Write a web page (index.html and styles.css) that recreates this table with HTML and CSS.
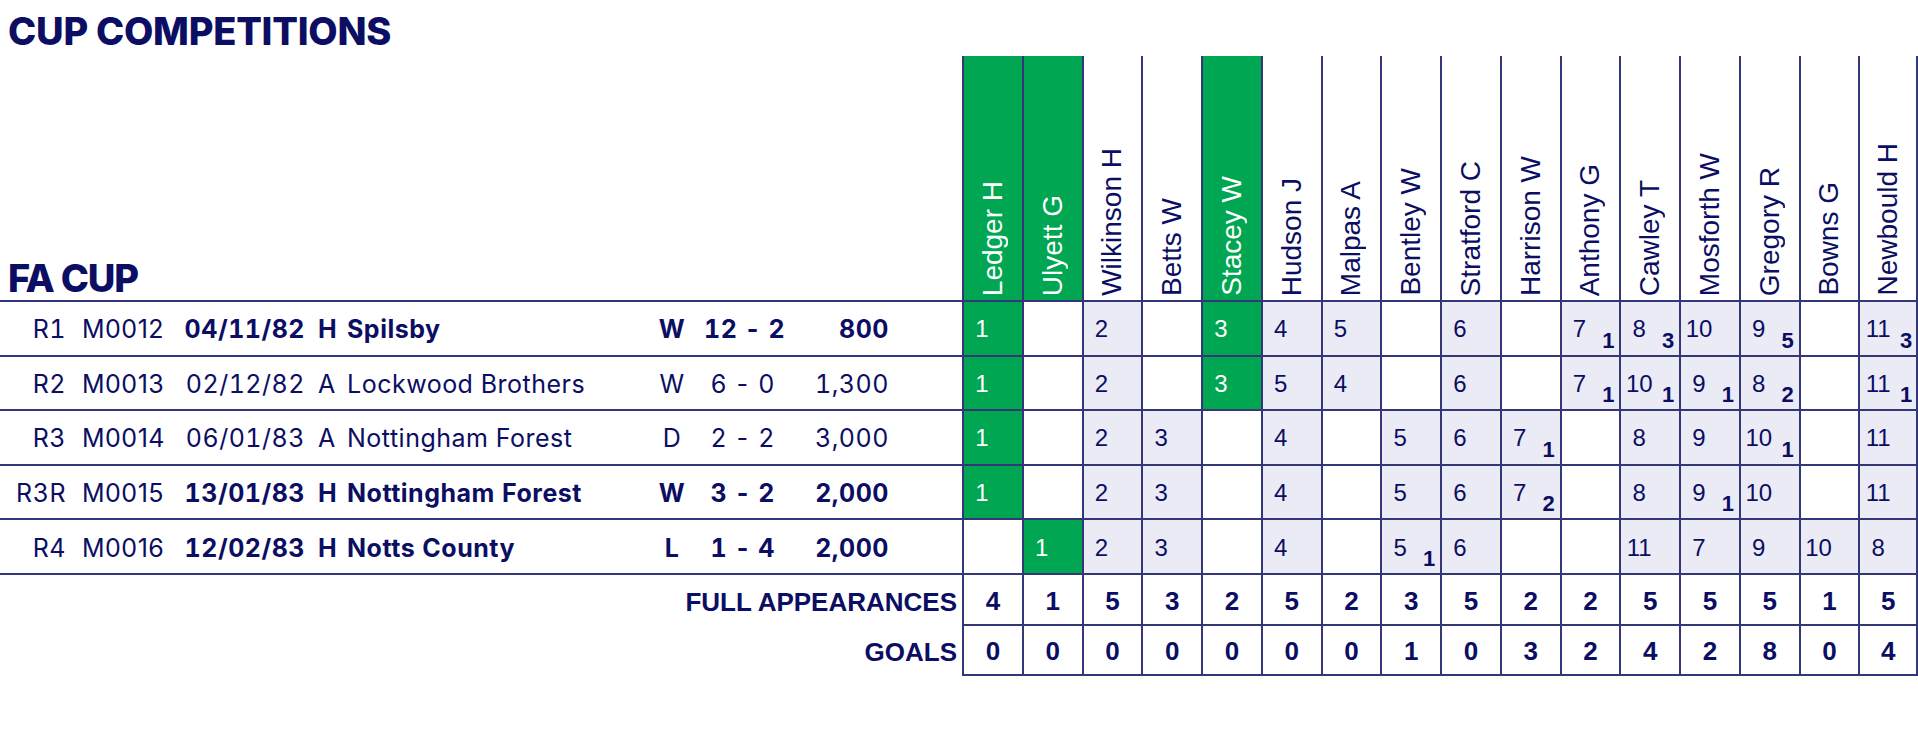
FILE: index.html
```html
<!DOCTYPE html>
<html lang="en">
<head>
<meta charset="utf-8">
<title>Cup Competitions</title>
<link rel="stylesheet" href="styles.css">
</head>
<body>
<h1 class="title">CUP COMPETITIONS</h1>
<div class="sheet">
  <div class="corner">FA CUP</div>
  <div class="h g"><span class="v">Ledger H</span></div>
  <div class="h g"><span class="v">Ulyett G</span></div>
  <div class="h"><span class="v">Wilkinson H</span></div>
  <div class="h"><span class="v">Betts W</span></div>
  <div class="h g"><span class="v">Stacey W</span></div>
  <div class="h"><span class="v">Hudson J</span></div>
  <div class="h"><span class="v">Malpas A</span></div>
  <div class="h"><span class="v">Bentley W</span></div>
  <div class="h"><span class="v">Stratford C</span></div>
  <div class="h"><span class="v">Harrison W</span></div>
  <div class="h"><span class="v">Anthony G</span></div>
  <div class="h"><span class="v">Cawley T</span></div>
  <div class="h"><span class="v">Mosforth W</span></div>
  <div class="h"><span class="v">Gregory R</span></div>
  <div class="h"><span class="v">Bowns G</span></div>
  <div class="h"><span class="v">Newbould H</span></div>

  <!-- R1 -->
  <div class="m b"><span class="rnd">R1</span><span class="code">M0012</span><span class="date">04/11/82</span><span class="ven">H</span><span class="opp">Spilsby</span><span class="res">W</span><span class="sc">12 - 2</span><span class="att">800</span></div>
  <div class="c g"><span class="n">1</span></div>
  <div class="c"></div>
  <div class="c f"><span class="n">2</span></div>
  <div class="c"></div>
  <div class="c g"><span class="n">3</span></div>
  <div class="c f"><span class="n">4</span></div>
  <div class="c f"><span class="n">5</span></div>
  <div class="c"></div>
  <div class="c f"><span class="n">6</span></div>
  <div class="c"></div>
  <div class="c f"><span class="n">7</span><span class="s">1</span></div>
  <div class="c f"><span class="n">8</span><span class="s">3</span></div>
  <div class="c f"><span class="n">10</span></div>
  <div class="c f"><span class="n">9</span><span class="s">5</span></div>
  <div class="c"></div>
  <div class="c f"><span class="n">11</span><span class="s">3</span></div>

  <!-- R2 -->
  <div class="m"><span class="rnd">R2</span><span class="code">M0013</span><span class="date">02/12/82</span><span class="ven">A</span><span class="opp">Lockwood Brothers</span><span class="res">W</span><span class="sc">6 - 0</span><span class="att">1,300</span></div>
  <div class="c g"><span class="n">1</span></div>
  <div class="c"></div>
  <div class="c f"><span class="n">2</span></div>
  <div class="c"></div>
  <div class="c g"><span class="n">3</span></div>
  <div class="c f"><span class="n">5</span></div>
  <div class="c f"><span class="n">4</span></div>
  <div class="c"></div>
  <div class="c f"><span class="n">6</span></div>
  <div class="c"></div>
  <div class="c f"><span class="n">7</span><span class="s">1</span></div>
  <div class="c f"><span class="n">10</span><span class="s">1</span></div>
  <div class="c f"><span class="n">9</span><span class="s">1</span></div>
  <div class="c f"><span class="n">8</span><span class="s">2</span></div>
  <div class="c"></div>
  <div class="c f"><span class="n">11</span><span class="s">1</span></div>

  <!-- R3 -->
  <div class="m"><span class="rnd">R3</span><span class="code">M0014</span><span class="date">06/01/83</span><span class="ven">A</span><span class="opp">Nottingham Forest</span><span class="res">D</span><span class="sc">2 - 2</span><span class="att">3,000</span></div>
  <div class="c g"><span class="n">1</span></div>
  <div class="c"></div>
  <div class="c f"><span class="n">2</span></div>
  <div class="c f"><span class="n">3</span></div>
  <div class="c"></div>
  <div class="c f"><span class="n">4</span></div>
  <div class="c"></div>
  <div class="c f"><span class="n">5</span></div>
  <div class="c f"><span class="n">6</span></div>
  <div class="c f"><span class="n">7</span><span class="s">1</span></div>
  <div class="c"></div>
  <div class="c f"><span class="n">8</span></div>
  <div class="c f"><span class="n">9</span></div>
  <div class="c f"><span class="n">10</span><span class="s">1</span></div>
  <div class="c"></div>
  <div class="c f"><span class="n">11</span></div>

  <!-- R3R -->
  <div class="m b"><span class="rnd">R3R</span><span class="code">M0015</span><span class="date">13/01/83</span><span class="ven">H</span><span class="opp">Nottingham Forest</span><span class="res">W</span><span class="sc">3 - 2</span><span class="att">2,000</span></div>
  <div class="c g"><span class="n">1</span></div>
  <div class="c"></div>
  <div class="c f"><span class="n">2</span></div>
  <div class="c f"><span class="n">3</span></div>
  <div class="c"></div>
  <div class="c f"><span class="n">4</span></div>
  <div class="c"></div>
  <div class="c f"><span class="n">5</span></div>
  <div class="c f"><span class="n">6</span></div>
  <div class="c f"><span class="n">7</span><span class="s">2</span></div>
  <div class="c"></div>
  <div class="c f"><span class="n">8</span></div>
  <div class="c f"><span class="n">9</span><span class="s">1</span></div>
  <div class="c f"><span class="n">10</span></div>
  <div class="c"></div>
  <div class="c f"><span class="n">11</span></div>

  <!-- R4 -->
  <div class="m b"><span class="rnd">R4</span><span class="code">M0016</span><span class="date">12/02/83</span><span class="ven">H</span><span class="opp">Notts County</span><span class="res">L</span><span class="sc">1 - 4</span><span class="att">2,000</span></div>
  <div class="c"></div>
  <div class="c g"><span class="n">1</span></div>
  <div class="c f"><span class="n">2</span></div>
  <div class="c f"><span class="n">3</span></div>
  <div class="c"></div>
  <div class="c f"><span class="n">4</span></div>
  <div class="c"></div>
  <div class="c f"><span class="n">5</span><span class="s">1</span></div>
  <div class="c f"><span class="n">6</span></div>
  <div class="c"></div>
  <div class="c"></div>
  <div class="c f"><span class="n">11</span></div>
  <div class="c f"><span class="n">7</span></div>
  <div class="c f"><span class="n">9</span></div>
  <div class="c f"><span class="n">10</span></div>
  <div class="c f"><span class="n">8</span></div>

  <!-- Totals -->
  <div class="tl">FULL APPEARANCES</div>
  <div class="t">4</div><div class="t">1</div><div class="t">5</div><div class="t">3</div>
  <div class="t">2</div><div class="t">5</div><div class="t">2</div><div class="t">3</div>
  <div class="t">5</div><div class="t">2</div><div class="t">2</div><div class="t">5</div>
  <div class="t">5</div><div class="t">5</div><div class="t">1</div><div class="t">5</div>

  <div class="tl">GOALS</div>
  <div class="t">0</div><div class="t">0</div><div class="t">0</div><div class="t">0</div>
  <div class="t">0</div><div class="t">0</div><div class="t">0</div><div class="t">1</div>
  <div class="t">0</div><div class="t">3</div><div class="t">2</div><div class="t">4</div>
  <div class="t">2</div><div class="t">8</div><div class="t">0</div><div class="t">4</div>
</div>
</body>
</html>
```
FILE: styles.css
```css
:root {
  --ink: #0b0e62;
  --line: #33377a;
  --fill: #ebebf6;
  --green: #00a651;
}

body {
  margin: 0;
  background: #ffffff;
  color: var(--ink);
}

.title {
  margin: 0;
  height: 56px;
  box-sizing: border-box;
  padding: 11px 0 0 8px;
  font-family: Inter, "Liberation Sans", sans-serif;
  font-weight: 800;
  font-size: 38px;
  line-height: 40px;
  letter-spacing: -0.25px;
}

.sheet {
  display: grid;
  grid-template-columns: 962px repeat(16, 1fr);
  grid-template-rows: 246px repeat(5, 54.6px) 51px 50px;
  width: 1918px;
}

.sheet > div {
  box-sizing: border-box;
}

.sheet > :nth-child(17n) {
  border-right: 2px solid var(--line);
}

.corner {
  display: flex;
  align-items: flex-end;
  padding: 0 0 3px 8px;
  border-bottom: 2px solid var(--line);
  font-family: Inter, "Liberation Sans", sans-serif;
  font-weight: 800;
  font-size: 38px;
  line-height: 38px;
  letter-spacing: -1.2px;
}

.h {
  display: flex;
  justify-content: center;
  align-items: flex-end;
  padding-bottom: 4px;
  border-left: 2px solid var(--line);
  border-bottom: 2px solid var(--line);
}

.v {
  writing-mode: vertical-rl;
  transform: rotate(180deg);
  font-family: "Liberation Sans", Arial, sans-serif;
  font-size: 28px;
  line-height: 1;
  white-space: nowrap;
}

.g {
  background: var(--green);
  color: #ffffff;
}

.f {
  background: var(--fill);
}

/* match info */
.m {
  display: grid;
  grid-template-columns: 66px 106px 133px 42px 293px 64px 71px 114px;
  align-items: center;
  padding-top: 3px;
  border-bottom: 2px solid var(--line);
  font-family: Inter, "Liberation Sans", sans-serif;
  font-size: 25px;
  line-height: 1;
  letter-spacing: 0.5px;
  font-variant-numeric: tabular-nums;
  white-space: nowrap;
}

.m.b {
  font-weight: 700;
}

.m .rnd,
.m .code {
  font-weight: 400;
}

.rnd {
  text-align: right;
}

.code {
  padding-left: 16px;
  font-variant-numeric: normal;
}

.date {
  text-align: right;
}

.ven {
  padding-left: 13px;
}

.res {
  text-align: center;
}

.sc,
.att {
  text-align: right;
}

/* player cells */
.c {
  display: grid;
  grid-template-columns: 36px 1fr;
  border-left: 2px solid var(--line);
  border-bottom: 2px solid var(--line);
  font-family: "Liberation Sans", Arial, sans-serif;
  font-size: 24px;
  line-height: 1;
}

.c .n {
  grid-column: 1;
  align-self: center;
  text-align: center;
  padding-top: 2px;
}

.c .s {
  grid-column: 2;
  align-self: end;
  text-align: center;
  font-weight: 700;
  font-size: 22px;
  line-height: 1;
  padding-bottom: 3px;
}

/* totals */
.tl {
  display: flex;
  justify-content: flex-end;
  align-items: center;
  padding: 3px 5px 0 0;
  font-family: "Liberation Sans", Arial, sans-serif;
  font-weight: 700;
  font-size: 26px;
  line-height: 1;
  white-space: nowrap;
}

.t {
  display: flex;
  justify-content: center;
  align-items: center;
  padding-top: 3px;
  border-left: 2px solid var(--line);
  border-bottom: 2px solid var(--line);
  font-family: "Liberation Sans", Arial, sans-serif;
  font-weight: 700;
  font-size: 26px;
  line-height: 1;
}
```
